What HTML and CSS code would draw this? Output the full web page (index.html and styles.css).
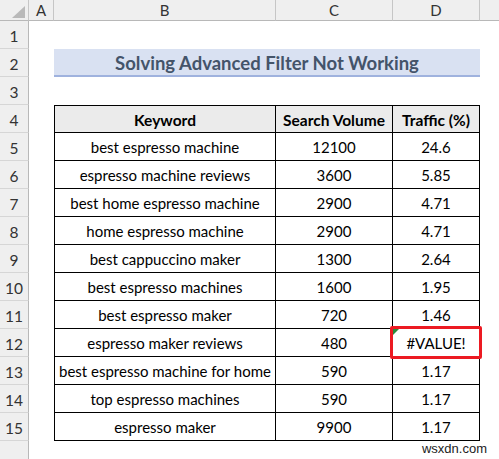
FILE: index.html
```html
<!DOCTYPE html>
<html>
<head>
<meta charset="utf-8">
<link rel="stylesheet" href="styles.css">
</head>
<body>
<div class="sheet">
  <div class="corner"><svg width="29" height="21" viewBox="0 0 29 21"><polygon points="25,6 25,18 12,18" fill="#b9b9b9"/></svg></div>
  <div class="colhead">A</div>
  <div class="colhead">B</div>
  <div class="colhead">C</div>
  <div class="colhead">D</div>
  <div class="colhead last"></div>

  <div class="rowhead">1</div><div></div><div></div><div></div><div></div><div></div>

  <div class="rowhead">2</div><div></div>
  <div class="title">Solving Advanced Filter Not Working</div>
  <div></div>

  <div class="rowhead">3</div><div></div><div></div><div></div><div></div><div></div>

  <div class="rowhead">4</div><div></div>
  <div class="cell th first">Keyword</div><div class="cell th">Search Volume</div><div class="cell th">Traffic (%)</div><div></div>

  <div class="rowhead">5</div><div></div>
  <div class="cell first">best espresso machine</div><div class="cell">12100</div><div class="cell">24.6</div><div></div>

  <div class="rowhead">6</div><div></div>
  <div class="cell first">espresso machine reviews</div><div class="cell">3600</div><div class="cell">5.85</div><div></div>

  <div class="rowhead">7</div><div></div>
  <div class="cell first">best home espresso machine</div><div class="cell">2900</div><div class="cell">4.71</div><div></div>

  <div class="rowhead">8</div><div></div>
  <div class="cell first">home espresso machine</div><div class="cell">2900</div><div class="cell">4.71</div><div></div>

  <div class="rowhead">9</div><div></div>
  <div class="cell first">best cappuccino maker</div><div class="cell">1300</div><div class="cell">2.64</div><div></div>

  <div class="rowhead">10</div><div></div>
  <div class="cell first">best espresso machines</div><div class="cell">1600</div><div class="cell">1.95</div><div></div>

  <div class="rowhead">11</div><div></div>
  <div class="cell first">best espresso maker</div><div class="cell">720</div><div class="cell">1.46</div><div></div>

  <div class="rowhead">12</div><div></div>
  <div class="cell first">espresso maker reviews</div><div class="cell">480</div>
  <div class="cell error">#VALUE!<span class="tri"></span><span class="highlight"></span></div><div></div>

  <div class="rowhead">13</div><div></div>
  <div class="cell first">best espresso machine for home</div><div class="cell">590</div><div class="cell">1.17</div><div></div>

  <div class="rowhead">14</div><div></div>
  <div class="cell first">top espresso machines</div><div class="cell">590</div><div class="cell">1.17</div><div></div>

  <div class="rowhead">15</div><div></div>
  <div class="cell first">espresso maker</div><div class="cell">9900</div><div class="cell">1.17</div><div></div>

  <div class="rowhead"></div><div></div><div></div><div></div>
  <div class="watermark">wsxdn.com</div>
</div>
</body>
</html>
```

FILE: styles.css
```css
html, body {
  margin: 0;
  padding: 0;
  background: #ffffff;
}
body {
  width: 499px;
  height: 459px;
  overflow: hidden;
  font-family: Lato, "Open Sans", sans-serif;
  color: #000;
}
.sheet {
  display: grid;
  grid-template-columns: 29px 25px 222px 117px 87px 19px;
  grid-template-rows: 21px;
  grid-auto-rows: 28px;
}
.sheet > div {
  box-sizing: border-box;
}
.corner {
  background: #efefef;
  border-right: 1px solid #c6c6c6;
  border-bottom: 1px solid #b8b8b8;
}
.corner svg { display: block; }
.colhead {
  background: #efefef;
  border-right: 1px solid #c6c6c6;
  border-bottom: 1px solid #b8b8b8;
  display: flex;
  align-items: center;
  justify-content: center;
  font-size: 15px;
  color: #333;
}
.colhead.last { border-right: none; }
.rowhead {
  background: #efefef;
  border-right: 1px solid #b8b8b8;
  border-bottom: 1px solid #d6d6d6;
  display: flex;
  align-items: center;
  justify-content: center;
  font-size: 15.5px;
  color: #333;
  padding-top: 2px;
}
.title {
  grid-column: span 3;
  background: #d9e1f2;
  border-bottom: 2px solid #9fb2de;
  display: flex;
  align-items: center;
  justify-content: center;
  font-weight: bold;
  font-size: 18.5px;
  color: #44546a;
  padding-top: 1px;
}
.cell {
  border-right: 1px solid #000;
  border-bottom: 1px solid #000;
  display: flex;
  align-items: center;
  justify-content: center;
  font-size: 15px;
  white-space: nowrap;
  padding-top: 1px;
}
.cell.first { border-left: 1px solid #000; }
.cell.th {
  border-top: 1px solid #000;
  background: #ebebeb;
  font-weight: bold;
  font-size: 15.5px;
}
.cell.error { position: relative; }
.tri {
  position: absolute;
  left: 0;
  top: 0;
  width: 0;
  height: 0;
  border-top: 6px solid #2c8a3c;
  border-right: 6px solid transparent;
}
.highlight {
  position: absolute;
  left: -3px;
  top: -3px;
  right: -3px;
  bottom: -3px;
  border: 3px solid #ec1a22;
  border-radius: 2px;
}
.watermark {
  grid-column: span 2;
  font-family: "Liberation Sans", Arial, sans-serif;
  font-size: 13px;
  color: #222;
  text-align: right;
  padding-right: 12px;
  padding-top: 0px;
}
```
